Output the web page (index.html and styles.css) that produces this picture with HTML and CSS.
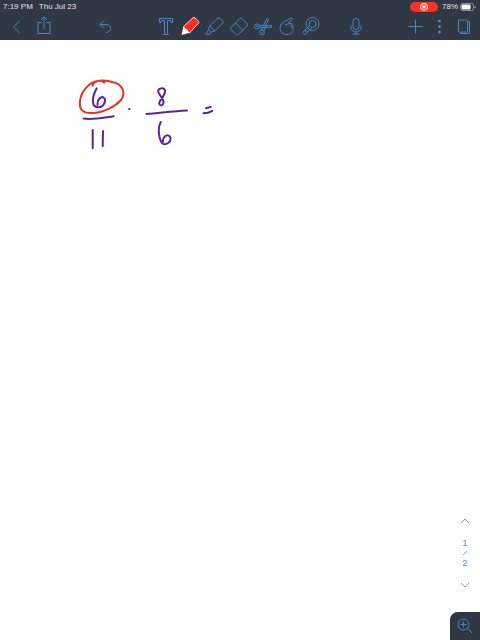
FILE: index.html
```html
<!DOCTYPE html>
<html lang="en">
<head>
<meta charset="utf-8">
<meta name="viewport" content="width=device-width, initial-scale=1">
<title>Notes</title>
<link rel="stylesheet" href="styles.css">
</head>
<body>
<header class="header">
  <div class="status">
    <span>7:19 PM</span>
    <span>Thu Jul 23</span>
    <span class="status-end">
      <span class="record"><svg width="10" height="10" viewBox="0 0 10 10"><circle cx="5" cy="5" r="3.5" fill="none" stroke="#fff"/><circle cx="5" cy="5" r="1.8" fill="#fff"/></svg></span>
      <span>78%</span>
      <svg width="16" height="8" viewBox="0 0 16 8"><rect x=".5" y=".5" width="13" height="7" rx="2" fill="none" stroke="#8b9097"/><rect x="1.500" y="1.500" width="9" height="5" rx="1" fill="#fff"/><path d="M15 3v2" stroke="#a5aab0"/></svg>
    </span>
  </div>
  <nav class="toolbar" aria-label="Tools">
    <div class="group nav-group">
      <button class="tool" aria-label="Back"><svg viewBox="0 0 24 24"><path d="M15.500 7l-6 6 6 6"/></svg></button>
      <button class="tool" aria-label="Share"><svg viewBox="0 0 24 24"><path d="M9.500 8.500H6v11h12v-11h-3.500M12 15V3M9 6l3-3 3 3"/></svg></button>
    </div>
    <button class="tool undo" aria-label="Undo"><svg viewBox="0 0 24 24"><path d="M10 6.500L6 10.500l4 4M6 10.500h6c6 0 6 8 0 8"/></svg></button>
    <div class="group tools">
      <button class="tool" aria-label="Text"><svg viewBox="0 0 24 24"><path d="M5.500 4.500h13v4h-1.500l-.5-2h-3v13l1 1h-5l1-1v-13h-3L7 8.500H5.500z"/></svg></button>
      <button class="tool" aria-label="Pen"><svg class="pen" viewBox="0 0 24 24"><path fill="#fff" d="M5.500 12.500L3.500 21l9-2.500z"/><path fill="#ff2b1c" stroke="#fff" stroke-width=".8" d="M5.500 12.500l9.500-8.700q1-.8 2 0l3.500 3.500q.8 1-.2 2l-8.600 9.500q-2-.2-2.500-3-3-.2-3.700-3.300z"/></svg></button>
      <button class="tool" aria-label="Highlighter"><svg viewBox="0 0 24 24"><path d="M8 11.500l8-7.500q1-.5 1.800.2l3 3q.7 1 0 1.800l-8 8zM8 11.500l-1.500 4 2.500 2.500 3.800-1M6.500 15.500L4 20l3.500.5 1.500-2.500"/></svg></button>
      <button class="tool" aria-label="Eraser"><svg viewBox="0 0 24 24"><path d="M4.300 13.200l8.400-8.400q1.300-1.300 2.600 0l4.600 4.600q1.300 1.300 0 2.600l-8.400 8.400q-1.300 1.300-2.600 0l-4.600-4.600q-1.300-1.300 0-2.600zM8.500 9l7.200 7.200"/></svg></button>
      <button class="tool" aria-label="Cut"><svg viewBox="0 0 24 24"><circle cx="6" cy="12.500" r="2.500"/><circle cx="11" cy="18.500" r="2.500"/><path d="M8.500 11.500l12 .2v1.600l-11.500.5M10 16.200L16 4.500l1.500.8-4.700 11.800M5 11.500l3 2M10 18l2 1"/></svg></button>
      <button class="tool" aria-label="Gesture"><svg viewBox="0 0 24 24"><path d="M5 14.500q-.3-4 3-6l8-4.500q2-.3 1.300 1.500L12.500 10l3.500-.5q1.600.4 1 2 1.700.3 1 2 1.200.8.300 2c0 3.200-3 5-6.300 5-4 0-7-2.500-7-6zM12.500 10l-2.500 1M17 11.500l-2 .5M18 13.500l-2 .5"/></svg></button>
      <button class="tool" aria-label="Pointer"><svg viewBox="0 0 24 24"><circle cx="13.500" cy="10" r="6.500"/><circle cx="13.500" cy="10" r="3.500"/><path d="M11 11l-2.500 2.500 2.300 2.300 2.200-2.300M8.500 13.500l-2.500 2.500 2.300 2.300 2.500-2.500M6 16l-2.500 2.500 2.300 2.300L8.300 18.300"/></svg></button>
    </div>
    <button class="tool mic" aria-label="Record"><svg viewBox="0 0 24 24"><rect x="9" y="4.500" width="6" height="11" rx="3"/><path d="M7 11.500v2c0 6 10 6 10 0v-2M12 18v2M8.500 20h7"/></svg></button>
    <div class="group">
      <button class="tool" aria-label="Add"><svg viewBox="0 0 24 24"><path d="M11.500 5.500v14M4.500 12.500h14"/></svg></button>
      <button class="tool" aria-label="More"><svg class="dots" viewBox="0 0 24 24"><circle cx="11.500" cy="7" r="1.300"/><circle cx="11.500" cy="12.500" r="1.300"/><circle cx="11.500" cy="18" r="1.300"/></svg></button>
      <button class="tool" aria-label="Pages"><svg viewBox="0 0 24 24"><rect x="6.500" y="6" width="9" height="12" rx="1"/><path d="M15.500 7.500h2v12h-9V18"/></svg></button>
    </div>
  </nav>
</header>
<main class="page">
  <svg class="ink" width="160" height="90" viewBox="70 70 160 90" role="img" aria-label="Handwritten fractions">
    <g stroke="#5b2596">
      <path d="M96.700 88.300C93 95 92 100 93.500 104.500 95.500 108.500 102 108.500 104.500 103 106.500 98 102.500 95.500 99.500 98.500 97.500 100.500 97.500 103 97.500 105"/>
      <path d="M83.700 118.500C93 120 104 117.500 113.700 116.300"/>
      <path d="M92.700 130v18.300M103 131l-.3 15.300"/>
      <path d="M129.200 109h.2" stroke-width="2.200"/>
      <path d="M165 90.500C164 87 158 88 158.200 91.500 158.500 94.500 163.500 98 163.500 102 163.500 107 158 106 159.500 102 161 98.500 165.500 95 165 90.500"/>
      <path d="M146.500 114C160 113 173 111 187 110.500"/>
      <path d="M160.700 122C158 127 158 136 161.500 142.500 164 146 170.500 143.500 170.500 138.500 170 134.500 166 134.500 164 137.500 162.800 139.500 162.800 142 162.500 143.500"/>
      <path d="M206 108.200l4.800-1.300M203.500 113.300q5 0 8.800-2.500"/>
    </g>
    <path stroke="#ee2f24" stroke-width="2" d="M92.500 85.500Q94 82 97 81.300C90 82 81 91 80 101 79 110 83 113 91 113 103 113.500 116 106 121.500 99.500 126 92 122 84 113 82.200 106 79.500 97 80 94.500 82.500M102 81.300l2.500 1.200"/>
  </svg>
</main>
<aside class="pager" aria-label="Page navigation">
  <button class="turn" aria-label="Previous page"><svg viewBox="0 0 10 6"><path d="M1 5l4-4 4 4"/></svg></button>
  <div class="count"><span>1</span><svg viewBox="0 0 10 6"><path d="M3 5l4-4"/></svg><span>2</span></div>
  <button class="turn" aria-label="Next page"><svg viewBox="0 0 10 6"><path d="M1 1l4 4 4-4"/></svg></button>
</aside>
<button class="zoom" aria-label="Zoom in"><svg width="16" height="16" viewBox="0 0 16 16"><circle cx="6.500" cy="6.500" r="5.500"/><path d="M10.500 10.500l4.500 4.500M6.500 3.500v6M3.500 6.500h6"/></svg></button>
</body>
</html>
```
FILE: styles.css
```css
* {
  box-sizing: border-box;
}

body {
  margin: 0;
  min-height: 100vh;
  background: #fff;
  font-family: "Liberation Sans", Arial, sans-serif;
}

button {
  margin: 0;
  padding: 0;
  border: 0;
  background: none;
}

svg {
  display: block;
}

.header {
  background: #303844;
  color: #e4e6e9;
}

.status {
  display: flex;
  align-items: center;
  gap: 6px;
  height: 12px;
  padding: 1px 4px 0 3px;
  font-size: 8px;
  line-height: 12px;
}

.status-end {
  display: flex;
  align-items: center;
  gap: 4px;
  margin-left: auto;
}

.status-end > svg {
  margin-left: -2px;
}

.record {
  display: grid;
  place-items: center;
  width: 28px;
  height: 10px;
  border-radius: 5px;
  background: #ff3028;
}

.toolbar {
  display: flex;
  align-items: center;
  height: 28px;
  padding: 0 4px;
}

.group {
  display: flex;
}

.nav-group {
  gap: 4px;
}

.tool {
  display: grid;
  place-items: center;
  width: 24px;
  height: 28px;
}

.tool svg {
  width: 24px;
  height: 24px;
  fill: none;
  stroke: #4788c5;
}

.tool .pen {
  stroke: none;
}

.tool .dots {
  fill: #5b9bd5;
  stroke: none;
}

.undo {
  margin-left: 8%;
}

.tools {
  width: 36%;
  margin-left: 36px;
}

.tools .tool {
  flex: 1;
}

.mic {
  margin: 0 auto 0 20px;
}

.page {
  padding: 30px 70px;
}

.ink {
  fill: none;
  stroke-width: 2;
  stroke-linecap: round;
  stroke-linejoin: round;
}

.pager {
  position: fixed;
  right: 8px;
  bottom: 48px;
  display: flex;
  flex-direction: column;
  align-items: center;
  gap: 10px;
  width: 14px;
  color: #4a8fda;
  font-size: 9px;
  line-height: 10px;
}

.pager svg {
  width: 10px;
  height: 6px;
  fill: none;
  stroke: #68a5e0;
}

.turn {
  display: grid;
  place-items: center;
  width: 14px;
  height: 14px;
}

.count {
  display: flex;
  flex-direction: column;
  align-items: center;
  gap: 2px;
}

.zoom {
  position: fixed;
  right: 0;
  bottom: 0;
  display: grid;
  place-items: center;
  width: 30px;
  height: 28px;
  border-radius: 8px 0 0 0;
  background: #303844;
}

.zoom svg {
  fill: none;
  stroke: #4788c5;
}
```
